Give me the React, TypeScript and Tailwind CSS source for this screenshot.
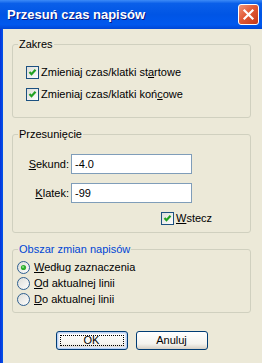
import React from 'react';

function CheckBox() {
    return (
        <svg width="13" height="13" viewBox="0 0 13 13" className="shrink-0">
            <defs>
                <linearGradient id="cbg" x1="0" y1="0" x2="1" y2="1">
                    <stop offset="0" stopColor="#dcdcd7" />
                    <stop offset="1" stopColor="#ffffff" />
                </linearGradient>
            </defs>
            <rect x="0.5" y="0.5" width="12" height="12" fill="url(#cbg)" stroke="#1c5180" />
            <polyline points="3.5,6 5.5,8.2 9.5,3.8" fill="none" stroke="#21a121" strokeWidth="2.2" />
        </svg>
    );
}

function Radio({ checked }: { checked?: boolean }) {
    return (
        <svg width="13" height="13" viewBox="0 0 13 13" className="shrink-0">
            <defs>
                <linearGradient id="rbg" x1="0" y1="0" x2="1" y2="1">
                    <stop offset="0" stopColor="#dcdcd7" />
                    <stop offset="1" stopColor="#ffffff" />
                </linearGradient>
            </defs>
            <circle cx="6.5" cy="6.5" r="6" fill="url(#rbg)" stroke="#2f5f8f" />
            {checked && <circle cx="6.5" cy="6.5" r="2.6" fill="#2fae2f" />}
            {checked && <circle cx="6" cy="6" r="1" fill="#8ee28a" />}
        </svg>
    );
}

function Group({ title, blue, children, className }: { title: string; blue?: boolean; children: React.ReactNode; className?: string }) {
    return (
        <fieldset className={`border border-[#d0d0bf] rounded-[3px] min-w-0 ${className ?? ''}`}>
            <legend className={`ml-[5px] px-[1px] leading-[13px] ${blue ? 'text-[#0046d5]' : 'text-black'}`}>{title}</legend>
            {children}
        </fieldset>
    );
}

function Button({ label, primary }: { label: string; primary?: boolean }) {
    return (
        <div
            className={`relative w-[72px] h-[19px] flex items-center justify-center rounded-[3px] border border-[#003c74] bg-[linear-gradient(#ffffff,#f4f3ee_70%,#d6d0c5)] ${
                primary ? 'shadow-[inset_0_0_0_1px_#b9d1f5,inset_0_0_0_2px_#dce7fa]' : ''
            }`}
        >
            {primary && <span className="absolute inset-[3px] border border-dotted border-black" />}
            <span className="leading-none">{label}</span>
        </div>
    );
}

export default function App() {
    return (
        <div className="w-[262px] h-[363px] overflow-hidden flex flex-col bg-[#ece9d8] text-[11px] text-black font-['Liberation_Sans',Arial,sans-serif]">
            {/* title bar */}
            <div className="h-[29px] shrink-0 flex items-center justify-between pl-[7px] pr-[3px] bg-[linear-gradient(#3d8bf7,#0a5fe9_12%,#0055e5_50%,#0058ee_85%,#0046d5)]">
                <span className="text-white font-bold text-[13px] [text-shadow:1px_1px_#0a1883]">Przesuń czas napisów</span>
                <div className="w-[21px] h-[21px] rounded-[3px] border border-white bg-[linear-gradient(135deg,#f0957a,#e25a36_45%,#c4381a)] flex items-center justify-center">
                    <svg width="13" height="13" viewBox="0 0 13 13">
                        <path d="M2.5 2.5 L10.5 10.5 M10.5 2.5 L2.5 10.5" stroke="#fff" strokeWidth="2.2" strokeLinecap="square" />
                    </svg>
                </div>
            </div>

            <div className="flex flex-1">
                <div className="w-[3px] bg-[linear-gradient(90deg,#0831d9,#0055ea)]" />
                <div className="flex-1 flex flex-col pl-[9px] pr-[11px] pt-[9px]">
                    {/* Zakres */}
                    <Group title="Zakres">
                        <div className="flex flex-col gap-[9px] pt-[15px] pb-[16px] pl-[13px]">
                            <div className="flex items-center gap-[2px] h-[13px]">
                                <CheckBox />
                                <span>Zmieniaj czas/klatki st<u className="underline-offset-[1px]">a</u>rtowe</span>
                            </div>
                            <div className="flex items-center gap-[2px] h-[13px]">
                                <CheckBox />
                                <span>Zmieniaj czas/klatki koń<u className="underline-offset-[1px]">c</u>owe</span>
                            </div>
                        </div>
                    </Group>

                    {/* Przesunięcie */}
                    <Group title="Przesunięcie" className="mt-[10px]">
                        <div className="flex flex-col pt-[13px] pb-[7px] pl-[13px]">
                            <div className="flex items-center h-[20px]">
                                <span className="w-[45px] pr-[2px] flex justify-end whitespace-nowrap"><span><u className="underline-offset-[1px]">S</u>ekund:</span></span>
                                <div className="w-[121px] h-[20px] border border-[#7f9db9] bg-white flex items-center pl-[3px]">-4.0</div>
                            </div>
                            <div className="flex items-center h-[20px] mt-[9px]">
                                <span className="w-[45px] pr-[2px] flex justify-end whitespace-nowrap"><span><u className="underline-offset-[1px]">K</u>latek:</span></span>
                                <div className="w-[121px] h-[20px] border border-[#7f9db9] bg-white flex items-center pl-[3px]">-99</div>
                            </div>
                            <div className="flex items-center gap-[2px] h-[13px] mt-[9px] ml-[135px]">
                                <CheckBox />
                                <span><u className="underline-offset-[1px]">W</u>stecz</span>
                            </div>
                        </div>
                    </Group>

                    {/* Obszar zmian napisów */}
                    <Group title="Obszar zmian napisów" blue className="mt-[10px]">
                        <div className="flex flex-col gap-[3px] pt-[5px] pb-[6px] pl-[4px]">
                            <div className="flex items-center gap-[4px] h-[13px]">
                                <Radio checked />
                                <span><u className="underline-offset-[1px]">W</u>edług zaznaczenia</span>
                            </div>
                            <div className="flex items-center gap-[4px] h-[13px]">
                                <Radio />
                                <span><u className="underline-offset-[1px]">O</u>d aktualnej linii</span>
                            </div>
                            <div className="flex items-center gap-[4px] h-[13px]">
                                <Radio />
                                <span><u className="underline-offset-[1px]">D</u>o aktualnej linii</span>
                            </div>
                        </div>
                    </Group>

                    {/* przyciski */}
                    <div className="flex justify-center gap-[8px] mt-[18px]">
                        <Button label="OK" primary />
                        <Button label="Anuluj" />
                    </div>
                </div>
            </div>
        </div>
    );
}
